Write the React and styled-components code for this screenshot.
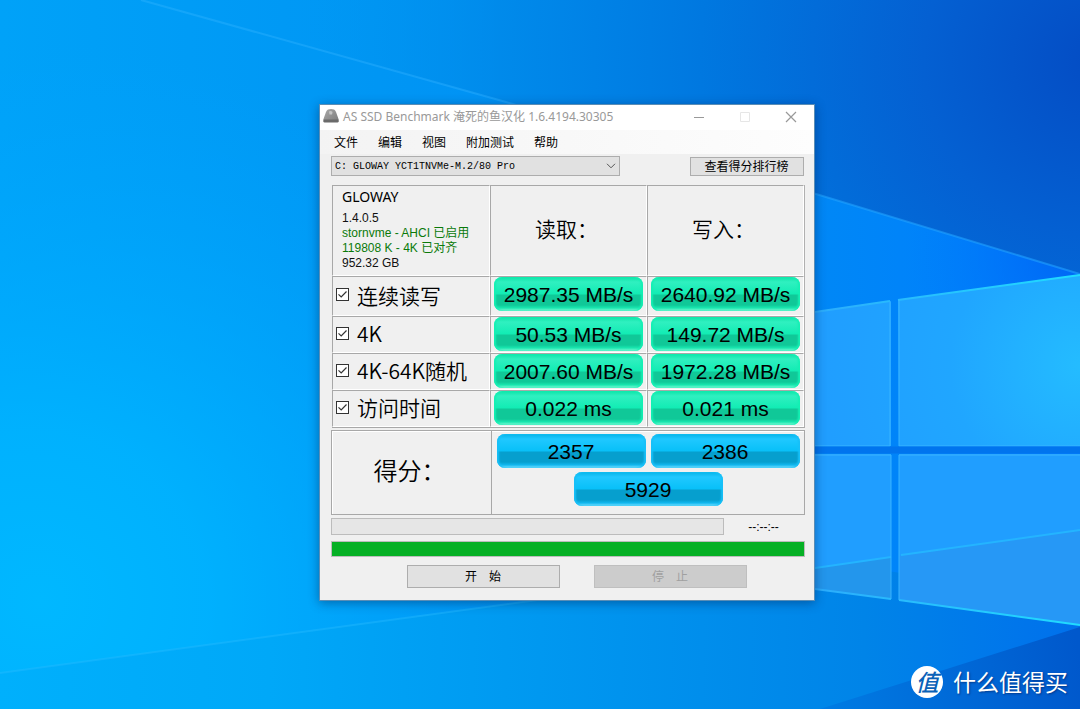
import { useState } from "react";
import styled, { createGlobalStyle } from "styled-components";

const GlobalStyle = createGlobalStyle`
  * { box-sizing: border-box; }

  body {
    margin: 0;
    font-family: "Liberation Sans", "Noto Sans CJK SC", sans-serif;
    font-size: 12px;
    color: #000;
  }

  button, select, input { font: inherit; color: inherit; margin: 0; }
`;

const Desktop = styled.main`
  position: relative;
  min-height: 100vh;
  overflow: hidden;
  background: #0090f4;
`;

const WallpaperSvg = styled.svg`
  position: absolute;
  inset: 0;
  width: 100%;
  height: 100%;
`;

const Window = styled.section`
  position: absolute;
  left: 319px;
  top: 104px;
  width: 496px;
  border: 1px solid #5b8db5;
  background: #f0f0f0;
  box-shadow: 0 2px 10px rgba(0, 30, 80, 0.45);
`;

const TitleBar = styled.header`
  display: flex;
  align-items: flex-start;
  height: 25px;
  padding-left: 3px;
  background: #fff;
  color: #999;

  > svg { margin-top: 4px; }
`;

const Title = styled.h1`
  flex: 1;
  margin: 0 0 0 4px;
  font-family: "Noto Sans", "Noto Sans CJK SC", sans-serif;
  font-size: 12px;
  line-height: 23px;
  font-weight: 400;
  white-space: nowrap;
`;

const CaptionButton = styled.button`
  display: grid;
  place-items: center;
  width: 46px;
  height: 24px;
  padding: 0;
  border: none;
  background: transparent;
  color: ${({ $faint }) => ($faint ? "#e6e6e6" : "#999")};
`;

const MenuBar = styled.nav`
  display: flex;
  gap: 20px;
  height: 24px;
  padding-left: 14px;
  background: linear-gradient(90deg, #f3f3f3, #fdfdfd);
`;

const MenuItem = styled.button`
  padding: 0;
  border: none;
  background: transparent;
  font-family: "Noto Sans CJK SC", sans-serif;
  font-size: 12px;
  line-height: 24px;
`;

const Body = styled.div`
  padding: 2px 9px 12px 11px;
`;

const Toolbar = styled.div`
  display: flex;
  align-items: center;
  justify-content: space-between;
  padding-right: 1px;
`;

const DriveField = styled.div`
  display: grid;
  align-items: center;
  width: 289px;

  > * { grid-area: 1 / 1; }
  svg { justify-self: end; margin-right: 4px; pointer-events: none; }
`;

const DriveSelect = styled.select`
  appearance: none;
  height: 20px;
  padding: 0 20px 0 3px;
  border: 1px solid #adadad;
  border-radius: 0;
  background: #e1e1e1;
  font-family: "Liberation Mono", monospace;
  font-size: 10px;
`;

const PushButton = styled.button`
  width: ${({ $wide }) => ($wide ? 153 : 114)}px;
  height: ${({ $wide }) => ($wide ? 23 : 19)}px;
  padding: 0 1px 1px 0;
  border: 1px solid #adadad;
  background: #e1e1e1;
  font-family: "Noto Sans CJK SC", sans-serif;
  font-size: 12px;
  line-height: 16px;

  &:disabled {
    border-color: #bfbfbf;
    background: #ccc;
    color: #a0a0a0;
  }
`;

const Results = styled.table`
  width: calc(100% - 1px);
  margin: 9px 0 0 1px;
  table-layout: fixed;
  border-collapse: separate;
  border-spacing: 0;
  border-right: 1px solid #b0b0b0;
  border-bottom: 1px solid #a8a8a8;

  th, td {
    padding: 0;
    border: 1px solid;
    border-color: #a8a8a8 #fff #fff #a8a8a8;
    font-weight: 400;
  }
`;

const LabelCol = styled.col`
  width: 158px;
`;

const HeadRow = styled.tr`
  height: 91px;
`;

const TestRow = styled.tr`
  height: ${({ $tall }) => ($tall ? 40 : 37)}px;
`;

const DriveInfo = styled.td`
  vertical-align: top;
`;

const DriveName = styled.div`
  padding: 2px 0 5px 9px;
  font-family: "Noto Sans", sans-serif;
  font-size: 14px;
  line-height: 18px;
`;

const InfoLine = styled.div`
  padding-left: 9px;
  line-height: 15px;
  color: ${({ $ok }) => ($ok ? "#0a7a0a" : "#111")};
`;

const Heading = styled.span`
  display: block;
  padding: 0 4px 5px 0;
  font-family: "Noto Sans CJK SC", sans-serif;
  font-weight: 350;
  font-size: ${({ $large }) => ($large ? 24 : 21)}px;
  line-height: 32px;
`;

const TestLabel = styled.label`
  display: flex;
  align-items: center;
  gap: 8px;
  padding: 0 0 3px 3px;
  font-family: "Noto Sans CJK SC", sans-serif;
  font-weight: 350;
  font-size: 21px;
  line-height: 32px;
  white-space: nowrap;
`;

const CheckBox = styled.span`
  display: grid;
  width: 13px;
  height: 13px;

  > * { grid-area: 1 / 1; }
  svg { pointer-events: none; }
  input:not(:checked) + svg { visibility: hidden; }
`;

const CheckInput = styled.input`
  appearance: none;
  width: 13px;
  height: 13px;
  border: 1px solid #333;
  background: #fff;
`;

const ValueCell = styled.td`
  vertical-align: top;
`;

const Badge = styled.div`
  width: 149px;
  height: 34px;
  margin: ${({ $blue }) => ($blue ? "0" : "0 0 0 3px")};
  border-radius: 8px;
  text-align: center;
  font-size: 21px;
  line-height: 36px;
  white-space: nowrap;
  background: ${({ $blue }) =>
    $blue
      ? "linear-gradient(#06b4e8 0, #20c8ff 5px, #08c0f8 17px, #069fce 18px, #069fce 28px, #10b8f0 31px, #8ce6ff 34px)"
      : "linear-gradient(#0ce4a8 0, #30f0c0 5px, #12ecb4 17px, #10c898 18px, #10c898 28px, #18e8b0 31px, #98f8dc 34px)"};
  box-shadow: inset 2px 0 2px ${({ $blue }) => ($blue ? "#18c0f8" : "#14f0b4")},
    inset -2px 0 2px ${({ $blue }) => ($blue ? "#18c0f8" : "#14f0b4")};
`;

const ScorePanel = styled.section`
  display: flex;
  height: 85px;
  margin-top: 2px;
  border: 1px solid #a8a8a8;
  box-shadow: inset 1px 1px #fff;
`;

const ScoreTitle = styled.div`
  display: grid;
  place-items: center;
  width: 160px;
  border-right: 1px solid #a8a8a8;
`;

const Scores = styled.div`
  flex: 1;
  display: flex;
  flex-wrap: wrap;
  justify-content: center;
  align-content: flex-start;
  gap: 4px 5px;
  padding-top: 3px;
`;

const StatusRow = styled.div`
  display: flex;
  align-items: center;
  margin: 3px 0 6px;
`;

const Bar = styled.progress`
  appearance: none;
  display: block;
  width: ${({ $short }) => ($short ? "393px" : "100%")};
  height: ${({ $short }) => ($short ? 17 : 16)}px;
  border: 1px solid #bcbcbc;
  background: #e6e6e6;

  &::-webkit-progress-bar { background: #e6e6e6; }
  &::-webkit-progress-value { background: #06b025; }
`;

const Elapsed = styled.span`
  flex: 1;
  padding-right: 2px;
  text-align: center;
  line-height: 16px;
`;

const Actions = styled.div`
  display: flex;
  justify-content: space-between;
  padding: 8px 58px 0 76px;
`;

const Watermark = styled.div`
  position: absolute;
  right: 12px;
  bottom: 11px;
  display: flex;
  gap: 10px;
  color: #fff;
  font-family: "Noto Sans CJK SC", sans-serif;
  font-size: 23px;
  line-height: 30px;
  text-shadow: 1px 1px 2px rgba(0, 30, 90, 0.6);
`;

const WatermarkLogo = styled.span`
  width: 32px;
  height: 32px;
  border-radius: 50%;
  background: #fff;
  color: #0a62b8;
  text-align: center;
  font-style: italic;
  font-weight: 500;
  text-shadow: none;
`;

const driveInfo = [
  { text: "1.4.0.5" },
  { text: "stornvme - AHCI 已启用", ok: true },
  { text: "119808 K - 4K 已对齐", ok: true },
  { text: "952.32 GB" },
];

const tests = [
  { id: "seq", name: "连续读写", read: "2987.35 MB/s", write: "2640.92 MB/s" },
  { id: "4k", name: "4K", read: "50.53 MB/s", write: "149.72 MB/s" },
  { id: "4k64", name: "4K-64K随机", read: "2007.60 MB/s", write: "1972.28 MB/s" },
  { id: "acc", name: "访问时间", read: "0.022 ms", write: "0.021 ms" },
];

const menus = ["文件", "编辑", "视图", "附加测试", "帮助"];

function Wallpaper() {
  return (
    <WallpaperSvg viewBox="0 0 1080 709" preserveAspectRatio="xMidYMid slice" aria-hidden="true">
      <defs>
        <linearGradient id="base" x1="0" y1="0" x2="1" y2="0">
          <stop offset="0" stopColor="#00a2f8" />
          <stop offset=".35" stopColor="#0096f4" />
          <stop offset=".75" stopColor="#0088f6" />
          <stop offset="1" stopColor="#007cff" />
        </linearGradient>
        <radialGradient id="cyan" gradientUnits="userSpaceOnUse" cx="40" cy="600" r="560">
          <stop offset="0" stopColor="#00b8ff" />
          <stop offset=".3" stopColor="#00b4ff" stopOpacity=".85" />
          <stop offset="1" stopColor="#00a4ff" stopOpacity="0" />
        </radialGradient>
        <radialGradient id="shade" gradientUnits="userSpaceOnUse" cx="1080" cy="250" r="170">
          <stop offset="0" stopColor="#0064f4" />
          <stop offset="1" stopColor="#0078f8" stopOpacity="0" />
        </radialGradient>
        <radialGradient id="sky" gradientUnits="userSpaceOnUse" cx="1100" cy="60" r="800">
          <stop offset="0" stopColor="#044cc4" />
          <stop offset=".22" stopColor="#0460d2" />
          <stop offset=".5" stopColor="#0078e0" />
          <stop offset=".75" stopColor="#0088e8" stopOpacity=".8" />
          <stop offset="1" stopColor="#0098f0" stopOpacity="0" />
        </radialGradient>
        <linearGradient id="floor" gradientUnits="userSpaceOnUse" x1="0" y1="640" x2="1080" y2="660">
          <stop offset="0" stopColor="#00b0fc" />
          <stop offset=".25" stopColor="#00a8f8" />
          <stop offset=".5" stopColor="#0098f0" />
          <stop offset=".8" stopColor="#0084e8" />
          <stop offset="1" stopColor="#0070ec" />
        </linearGradient>
        <linearGradient id="corner" gradientUnits="userSpaceOnUse" x1="820" y1="709" x2="1080" y2="660">
          <stop offset="0" stopColor="#007ce4" />
          <stop offset="1" stopColor="#0058cc" />
        </linearGradient>
        <linearGradient id="beam" gradientUnits="userSpaceOnUse" x1="141" y1="0" x2="1080" y2="274">
          <stop offset="0" stopColor="#30b4ff" stopOpacity=".4" />
          <stop offset="1" stopColor="#20a0ff" stopOpacity=".6" />
        </linearGradient>
        <radialGradient id="pane" gradientUnits="userSpaceOnUse" cx="1080" cy="365" r="260">
          <stop offset="0" stopColor="#24bcff" />
          <stop offset=".5" stopColor="#20a6ff" />
          <stop offset="1" stopColor="#209eff" />
        </radialGradient>
        <linearGradient id="edge" gradientUnits="userSpaceOnUse" x1="815" y1="0" x2="1080" y2="0">
          <stop offset="0" stopColor="#2cacfc" />
          <stop offset="1" stopColor="#20dcff" />
        </linearGradient>
      </defs>
      <rect width="1080" height="709" fill="url(#base)" />
      <rect width="1080" height="709" fill="url(#cyan)" />
      <rect x="800" y="100" width="280" height="350" fill="url(#shade)" />
      <path d="M141 0L506 102L816 194L1080 274V0Z" fill="url(#sky)" />
      <path d="M141 0L506 102L816 194L1080 274" fill="none" stroke="url(#beam)" strokeWidth="2" />
      <path d="M0 673L575 595L815 560L1080 600V709H0Z" fill="url(#floor)" />
      <path d="M0 673L575 595" stroke="#28bcff" strokeOpacity=".4" strokeWidth="2" />
      <path d="M820 709L1080 627V709Z" fill="url(#corner)" />
      <path d="M700 328L891 301V446H700Z" fill="url(#pane)" />
      <path d="M898 300L1080 275V446H899Z" fill="url(#pane)" />
      <path d="M700 454H891V599L700 572Z" fill="#209eff" />
      <path d="M899 454H1080V625L899 600Z" fill="#209eff" />
      <path d="M700 585L891 557V599L700 572Z" fill="#2396ec" />
      <path d="M899 556L1080 530V625L899 600Z" fill="#2698f6" />
      <path d="M815 568L891 557M901 555L1080 530" stroke="#24b4ff" strokeWidth="2" />
      <path d="M815 312L890 301M898 300L1080 275M899 600L1080 625M815 589L891 599" stroke="url(#edge)" strokeWidth="2" />
      <path
        d="M890 302V446H815M899 300V446H1080M815 455H891V599M1080 455H899V600"
        fill="none"
        stroke="#38b4ff"
        strokeWidth="1"
      />
      <path d="M815 450H1080" stroke="#0074ee" strokeWidth="7" />
    </WallpaperSvg>
  );
}

function DiskIcon() {
  return (
    <svg width="16" height="14" viewBox="0 0 16 14" aria-hidden="true">
      <defs>
        <linearGradient id="disk" x1="0" y1="0" x2="1" y2="1">
          <stop offset="0" stopColor="#a8a8a8" />
          <stop offset="1" stopColor="#7c7c7c" />
        </linearGradient>
      </defs>
      <path d="M5 .5Q8 -.3 11 .5Q12.300 1 13 3L15.500 10V13H.5V10L3 3Q3.700 1 5 .5Z" fill="url(#disk)" />
      <path d="M6 2.500Q8 1.500 9.500 3L9 5.500H6.500Z" fill="#c6c6c6" />
      <path d="M.5 10.500H15.500V12.500Q15.500 13.500 14.500 13.500H1.500Q.5 13.500 .5 12.500Z" fill="#6a6a6a" />
    </svg>
  );
}

function TestCheck({ id, name }) {
  const [checked, setChecked] = useState(true);

  return (
    <TestLabel htmlFor={id}>
      <CheckBox>
        <CheckInput
          id={id}
          type="checkbox"
          checked={checked}
          onChange={(e) => setChecked(e.target.checked)}
        />
        <svg width="13" height="13" viewBox="0 0 13 13" fill="none" stroke="#333" strokeWidth="1.200">
          <path d="M2.500 6.300L5.200 9L10.500 3.500" />
        </svg>
      </CheckBox>
      {name}
    </TestLabel>
  );
}

export default function App() {
  return (
    <Desktop>
      <GlobalStyle />
      <Wallpaper />

      <Window>
        <TitleBar>
          <DiskIcon />
          <Title>AS SSD Benchmark 淹死的鱼汉化 1.6.4194.30305</Title>
          <CaptionButton aria-label="最小化">
            <svg width="12" height="12" stroke="currentColor"><path d="M1 6.500h10" /></svg>
          </CaptionButton>
          <CaptionButton aria-label="最大化" $faint>
            <svg width="12" height="12" stroke="currentColor" fill="none"><path d="M1.500 1.500h9v9h-9z" /></svg>
          </CaptionButton>
          <CaptionButton aria-label="关闭">
            <svg width="12" height="12" stroke="currentColor" strokeWidth="1.200"><path d="M1 1l10 10M11 1L1 11" /></svg>
          </CaptionButton>
        </TitleBar>

        <MenuBar>
          {menus.map((m) => (
            <MenuItem key={m}>{m}</MenuItem>
          ))}
        </MenuBar>

        <Body>
          <Toolbar>
            <DriveField>
              <DriveSelect aria-label="C:">
                <option>C: GLOWAY YCT1TNVMe-M.2/80 Pro</option>
              </DriveSelect>
              <svg width="10" height="6" viewBox="0 0 10 6" fill="none" stroke="#555">
                <path d="M1 .8L5 4.800L9 .8" />
              </svg>
            </DriveField>
            <PushButton>查看得分排行榜</PushButton>
          </Toolbar>

          <Results>
            <colgroup>
              <LabelCol />
              <col />
              <col />
            </colgroup>
            <tbody>
              <HeadRow>
                <DriveInfo>
                  <DriveName>GLOWAY</DriveName>
                  {driveInfo.map((line) => (
                    <InfoLine key={line.text} $ok={line.ok}>{line.text}</InfoLine>
                  ))}
                </DriveInfo>
                <th scope="col"><Heading>读取：</Heading></th>
                <th scope="col"><Heading>写入：</Heading></th>
              </HeadRow>
              {tests.map((t, i) => (
                <TestRow key={t.id} $tall={i === 0}>
                  <th scope="row"><TestCheck id={t.id} name={t.name} /></th>
                  <ValueCell><Badge>{t.read}</Badge></ValueCell>
                  <ValueCell><Badge>{t.write}</Badge></ValueCell>
                </TestRow>
              ))}
            </tbody>
          </Results>

          <ScorePanel>
            <ScoreTitle><Heading $large>得分：</Heading></ScoreTitle>
            <Scores>
              <Badge $blue>2357</Badge>
              <Badge $blue>2386</Badge>
              <Badge $blue>5929</Badge>
            </Scores>
          </ScorePanel>

          <StatusRow>
            <Bar $short value={0} max={100} aria-label="当前测试" />
            <Elapsed>--:--:--</Elapsed>
          </StatusRow>
          <Bar value={100} max={100} aria-label="总进度" />

          <Actions>
            <PushButton $wide>开　始</PushButton>
            <PushButton $wide disabled>停　止</PushButton>
          </Actions>
        </Body>
      </Window>

      <Watermark>
        <WatermarkLogo>值</WatermarkLogo>
        什么值得买
      </Watermark>
    </Desktop>
  );
}
